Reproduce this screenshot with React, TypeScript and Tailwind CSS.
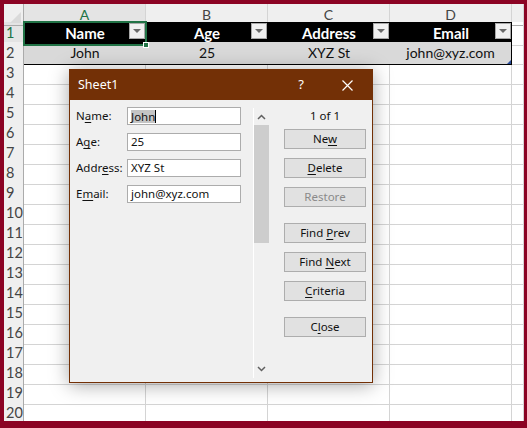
import React from "react";

const cols = ["A", "B", "C", "D", ""];
const headers = ["Name", "Age", "Address", "Email"];
const values = ["John", "25", "XYZ St", "john@xyz.com"];

function DropBtn() {
  return (
    <div className="absolute right-[1px] top-[1px] w-[16px] h-[16px] bg-[#f0f0f0] border border-[#a8a8a8] flex items-center justify-center">
      <div className="w-0 h-0 border-l-[4px] border-r-[4px] border-t-[4px] border-l-transparent border-r-transparent border-t-[#6b6b6b]" />
    </div>
  );
}

function U({ children }: { children: React.ReactNode }) {
  return <span className="underline underline-offset-2">{children}</span>;
}

function Btn({ children, disabled }: { children: React.ReactNode; disabled?: boolean }) {
  return (
    <div
      className={`h-[20px] w-[82px] border border-[#adadad] bg-[#e1e1e1] flex items-center justify-center text-[11.5px] ${
        disabled ? "text-[#8a8a8a]" : "text-[#111]"
      }`}
    >
      <span className="whitespace-pre">{children}</span>
    </div>
  );
}

function Field({ label, value, selected }: { label: React.ReactNode; value: string; selected?: boolean }) {
  return (
    <div className="flex items-center h-[18px]">
      <div className="w-[51px] text-[11.5px] text-[#111]">{label}</div>
      <div className="w-[114px] h-[18px] bg-white border border-[#acacac] flex items-center px-[3px] text-[11.5px] text-[#111]">
        {selected ? (
          <>
            <span className="bg-[#c4c4c4] leading-[13px]">{value}</span>
            <span className="w-[1px] h-[13px] bg-black" />
          </>
        ) : (
          value
        )}
      </div>
    </div>
  );
}

export default function App() {
  const rows = Array.from({ length: 20 }, (_, i) => i + 1);
  return (
    <div className="w-[527px] h-[428px] bg-[#8b0323] pt-[4px] pl-[4px] pr-[3px] pb-[7px]">
      <div className="relative w-full h-full bg-white overflow-hidden" style={{ fontFamily: "Lato, 'Liberation Sans', sans-serif" }}>
        {/* column headers */}
        <div className="grid grid-cols-[20px_122px_122px_122px_122px_1fr] h-[18px] bg-[#efefef] text-[#444] text-[14px]">
          <div className="border-r border-b border-[#ababab] relative">
            <div className="absolute right-[2px] bottom-[2px] w-0 h-0 border-l-[11px] border-l-transparent" style={{ borderBottom: "11px solid #dadada" }} />
          </div>
          {cols.map((c, i) => (
            <div
              key={i}
              className={`flex items-center justify-center border-r border-b ${
                i === 0 ? "border-[#d4d4d4] border-b-[#217346] text-[#217346] bg-[#e4e4e4]" : "border-[#d4d4d4] border-b-[#ababab]"
              }`}
            >
              {c}
            </div>
          ))}
        </div>
        {/* rows */}
        {rows.map((r) => (
          <div key={r} className="grid grid-cols-[20px_122px_122px_122px_122px_1fr] h-[20px] text-[14px]">
            <div
              className={`flex items-center pl-[2px] text-[14.5px] border-r border-b border-[#d4d4d4] border-r-[#ababab] ${
                r === 1 ? "bg-[#e4e4e4] text-[#217346]" : "bg-[#efefef] text-[#444]"
              }`}
            >
              {r}
            </div>
            {cols.map((_, i) => {
              if (r === 1 && i < 4)
                return (
                  <div key={i} className={`relative bg-black text-white text-[15px] font-bold flex items-center justify-center border-b border-[#d4d4d4] ${i === 0 ? "z-10" : ""}`}>
                    {headers[i]}
                    <DropBtn />
                    {i === 0 && (
                      <>
                        <div className="absolute -left-[1px] -top-[1px] -right-[1px] -bottom-[1px] border-2 border-[#217346]" />
                        <div className="absolute -right-[3px] -bottom-[3px] w-[6px] h-[6px] bg-[#217346] border border-white" />
                      </>
                    )}
                  </div>
                );
              if (r === 2 && i < 4)
                return (
                  <div
                    key={i}
                    className={`relative bg-[#d9d9d9] text-[#111] flex items-center justify-center border-b border-black ${i === 3 ? "border-r" : ""}`}
                  >
                    {values[i]}
                    {i === 3 && <div className="absolute right-0 bottom-0 w-0 h-0 border-l-[4px] border-l-transparent" style={{ borderBottom: "4px solid #2a4d9c" }} />}
                  </div>
                );
              return <div key={i} className="border-r border-b border-[#d4d4d4]" />;
            })}
          </div>
        ))}

        {/* Data form dialog */}
        <div
          className="absolute z-20 left-[65px] top-[65px] w-[304px] h-[314px] bg-[#f0f0f0] border border-[#733006] shadow-[0_2px_18px_rgba(0,0,0,0.35)] flex flex-col"
          style={{ fontFamily: "'Noto Sans', 'Open Sans', sans-serif" }}
        >
          <div className="h-[30px] bg-[#733006] flex items-center pl-[8px] text-white text-[12.5px] shrink-0">
            <span>Sheet1</span>
            <span className="ml-auto mr-[38px] text-[13px]">?</span>
            <svg width="11" height="11" viewBox="0 0 11 11" className="mr-[19px]">
              <path d="M0.5 0.5L10.5 10.5M10.5 0.5L0.5 10.5" stroke="white" strokeWidth="1.2" />
            </svg>
          </div>
          <div className="flex flex-1 pl-[6px]">
            <div className="flex flex-col gap-[8px] pt-[7px] w-[177px]">
              <Field label={<>N<U>a</U>me:</>} value="John" selected />
              <Field label={<>A<U>g</U>e:</>} value="25" />
              <Field label={<>Addr<U>e</U>ss:</>} value="XYZ St" />
              <Field label={<>E<U>m</U>ail:</>} value="john@xyz.com" />
            </div>
            {/* scrollbar */}
            <div className="mt-[8px] mb-[4px] w-[16px] border-l border-white flex flex-col items-center">
              <svg width="9" height="6" viewBox="0 0 9 6" className="mt-[6px] mb-[5px]">
                <path d="M1 5L4.5 1.5L8 5" stroke="#606060" strokeWidth="1.5" fill="none" />
              </svg>
              <div className="w-[15px] h-[118px] bg-[#cdcdcd]" />
              <svg width="9" height="6" viewBox="0 0 9 6" className="mt-auto mb-[6px]">
                <path d="M1 1L4.5 4.5L8 1" stroke="#606060" strokeWidth="1.5" fill="none" />
              </svg>
            </div>
            <div className="ml-[15px] flex flex-col pt-[7px] text-[11.5px]">
              <div className="h-[18px] flex items-center justify-center text-[#111] mb-[4px]">1 of 1</div>
              <div className="flex flex-col gap-[9px]">
                <Btn>Ne<U>w</U></Btn>
                <Btn><U>D</U>elete</Btn>
                <Btn disabled>Restore</Btn>
              </div>
              <div className="flex flex-col gap-[9px] mt-[16px]">
                <Btn>Find <U>P</U>rev</Btn>
                <Btn>Find <U>N</U>ext</Btn>
                <Btn><U>C</U>riteria</Btn>
              </div>
              <div className="mt-[16px]">
                <Btn>C<U>l</U>ose</Btn>
              </div>
            </div>
          </div>
        </div>
      </div>
    </div>
  );
}
